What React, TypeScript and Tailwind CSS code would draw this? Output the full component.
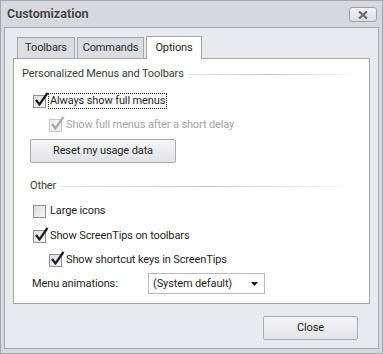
const font = "font-['Roboto','Noto_Sans',sans-serif]";

const Check = ({ checked, disabled }: { checked?: boolean; disabled?: boolean }) => (
  <span className="relative inline-block w-[13px] h-[13px] shrink-0">
    <span
      className={`absolute inset-0 border ${
        disabled ? "border-[#c4c4c8] bg-[#f0f0f2]" : "border-[#8e8f94] bg-gradient-to-br from-[#dcdde0] to-[#f7f7f8]"
      }`}
    />
    {checked && (
      <svg className="absolute left-[1px] top-[-3px]" width="15" height="15" viewBox="0 0 15 15">
        <path
          d="M2 8 L5.5 12.5 L13.5 1"
          fill="none"
          stroke={disabled ? "#a8a8ac" : "#1b1b1b"}
          strokeWidth="2.2"
        />
      </svg>
    )}
  </span>
);

const Header = ({ title, className }: { title: string; className?: string }) => (
  <div className={`h-[16px] flex items-center gap-[4px] ${className ?? ""}`}>
    <span className="text-[#3c3c3c] whitespace-nowrap">{title}</span>
    <span className="flex-1 h-px mr-[12px] bg-gradient-to-r from-[#e4e4e8] via-[#c8c8cc] to-transparent" />
  </div>
);

const Row = ({ className, children }: { className?: string; children: React.ReactNode }) => (
  <div className={`h-[16px] flex items-center ${className ?? ""}`}>{children}</div>
);

export default function App() {
  return (
    <div className={`w-[383px] h-[354px] bg-[#d7d8de] border border-[#a5a6ae] flex flex-col text-[11px] tracking-[-0.12px] leading-[16px] text-[#1e1e1e] ${font}`}>
      <div className="h-[26px] flex items-center justify-between pl-[6px] pr-[5px]">
        <span className="font-bold text-[12.5px] tracking-normal text-[#444] [text-shadow:0_1px_0_#f4f4f6]">Customization</span>
        <span className="w-[28px] h-[15px] mt-[1px] rounded-[3px] border border-[#9fa0a8] bg-gradient-to-b from-[#f3f3f5] to-[#dcdde2] flex items-center justify-center">
          <svg width="10" height="8" viewBox="0 0 10 8">
            <path d="M1 0.5 L9 7.5 M9 0.5 L1 7.5" stroke="#6b6b72" strokeWidth="2.2" />
          </svg>
        </span>
      </div>
      <div className="mx-[3px] h-[322px] border border-[#a6a7ae] bg-[#e9eaee] flex flex-col px-[8px] pt-[7px]">
        <div className="flex items-end pl-[4px] gap-[2px] h-[23px]">
          <div className="h-[21px] w-[58px] border border-b-0 border-[#a4a5ac] bg-[#dcdde2] flex items-center justify-center text-[#2a2a2a]">Toolbars</div>
          <div className="h-[21px] w-[67px] border border-b-0 border-[#a4a5ac] bg-[#dcdde2] flex items-center justify-center text-[#2a2a2a]">Commands</div>
          <div className="relative h-[23px] -mb-px w-[56px] border border-b-0 border-[#a4a5ac] bg-white flex items-center justify-center z-10 pb-[1px]">Options</div>
        </div>
        <div className="h-[246px] border border-[#a4a5ac] bg-white pl-[8px] flex flex-col">
          <Header title="Personalized Menus and Toolbars" className="mt-[7px]" />
          <Row className="mt-[11px] ml-[11px]">
            <Check checked />
            <span className="ml-[3px] px-[1px] leading-[14px] outline outline-1 outline-dotted outline-[#222]">Always show full menus</span>
          </Row>
          <Row className="mt-[8px] ml-[27px] text-[#a3a3a8]">
            <Check checked disabled />
            <span className="ml-[4px]">Show full menus after a short delay</span>
          </Row>
          <div className="mt-[6px] ml-[8px] w-[146px] h-[24px] rounded-[2px] border border-[#a9aab0] bg-gradient-to-b from-[#f5f5f7] to-[#e2e3e7] flex items-center justify-center">
            Reset my usage data
          </div>
          <Header title="Other" className="mt-[15px] ml-[8px]" />
          <Row className="mt-[9px] ml-[11px]">
            <Check />
            <span className="ml-[4px]">Large icons</span>
          </Row>
          <Row className="mt-[9px] ml-[11px]">
            <Check checked />
            <span className="ml-[4px]">Show ScreenTips on toolbars</span>
          </Row>
          <Row className="mt-[8px] ml-[27px]">
            <Check checked />
            <span className="ml-[4px]">Show shortcut keys in ScreenTips</span>
          </Row>
          <div className="flex items-center mt-[5px] ml-[10px]">
            <span className="w-[116px]">Menu animations:</span>
            <div className="w-[117px] h-[21px] border border-[#b8b9be] bg-white flex items-center justify-between pl-[4px] pr-[6px]">
              <span>(System default)</span>
              <svg width="7" height="4" viewBox="0 0 7 4">
                <path d="M0 0 H7 L3.5 4 Z" fill="#1b1b1b" />
              </svg>
            </div>
          </div>
        </div>
        <div className="flex justify-end pr-[12px] mt-[12px]">
          <div className="w-[95px] h-[24px] rounded-[2px] border border-[#a9aab0] bg-gradient-to-b from-[#f5f5f7] to-[#e2e3e7] flex items-center justify-center">
            Close
          </div>
        </div>
      </div>
    </div>
  );
}
